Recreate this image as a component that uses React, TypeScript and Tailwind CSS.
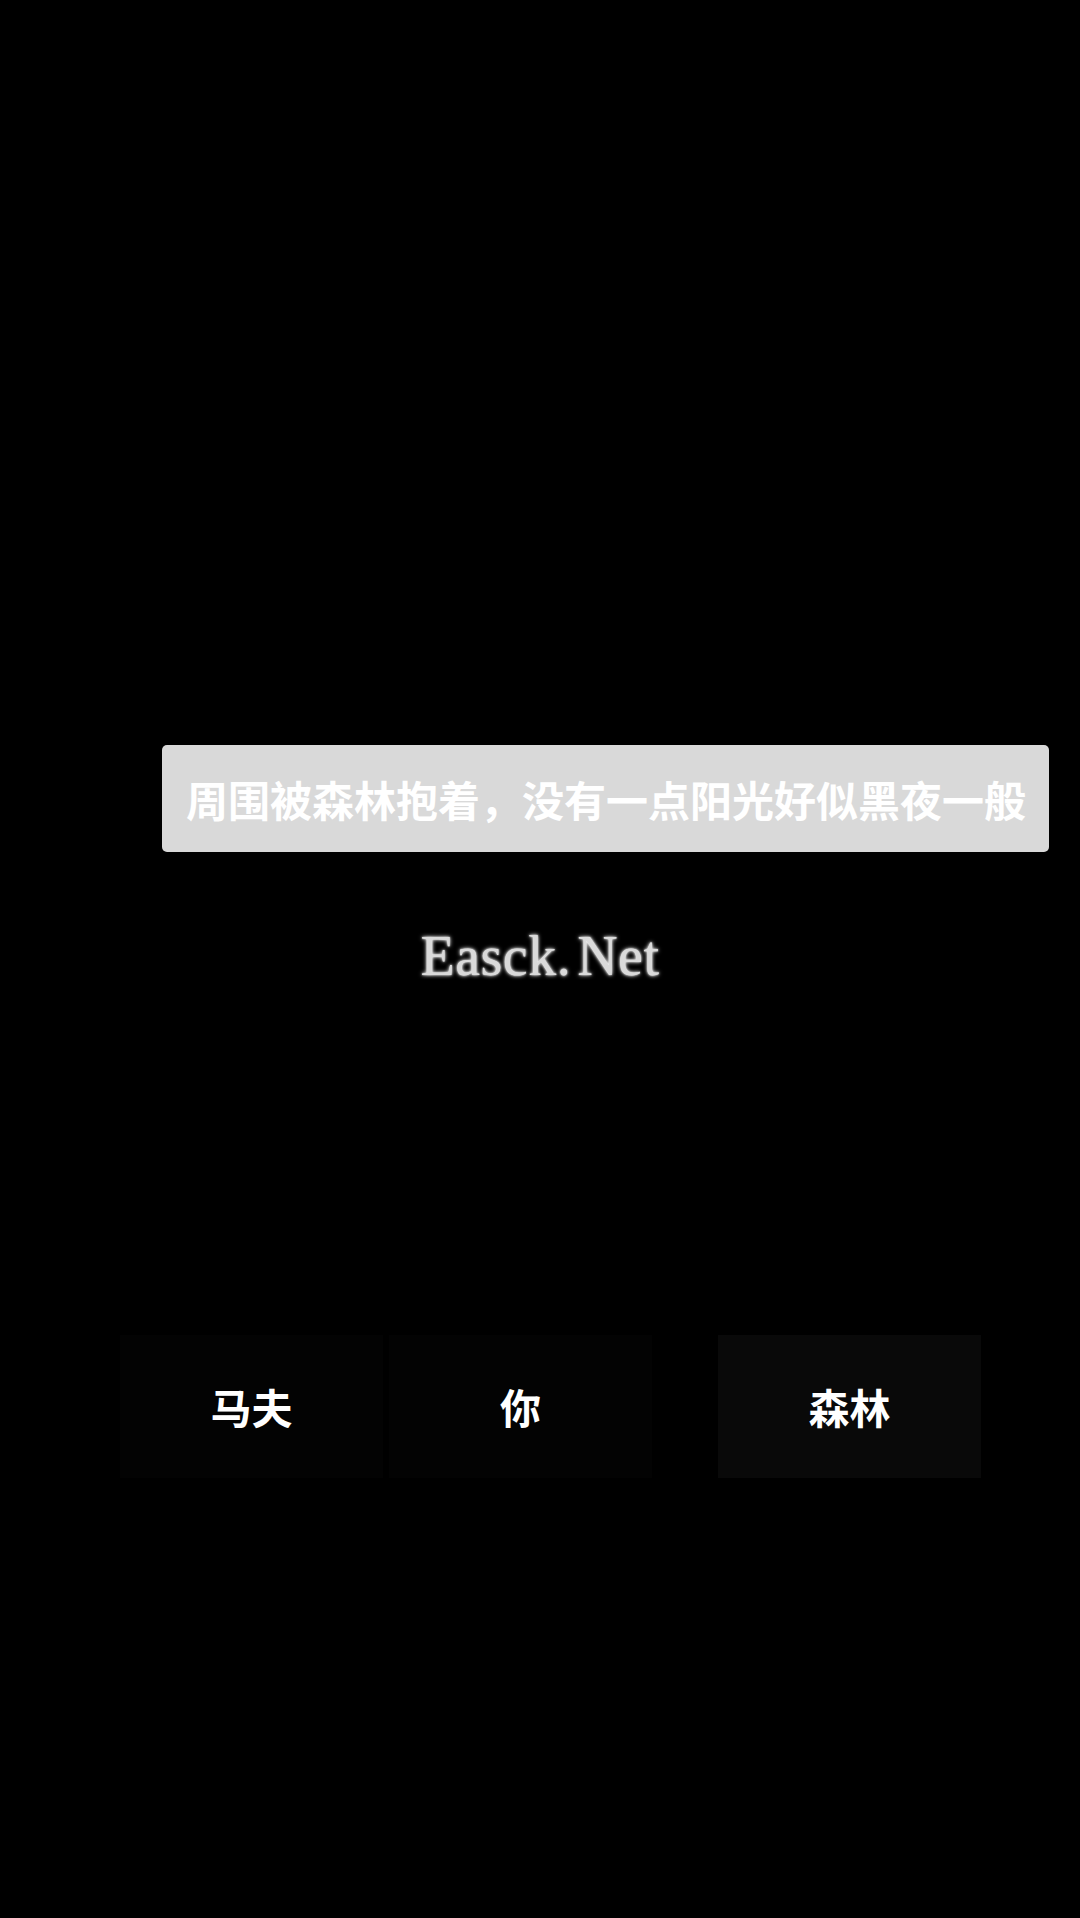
import React from 'react';

const cjk = { fontFamily: '"Noto Sans CJK SC", "Noto Sans", sans-serif' };

interface TabProps {
  label: string;
  active?: boolean;
}

const Tab: React.FC<TabProps> = ({ label, active }) => (
  <button
    className={`flex h-[143px] w-[263px] items-center justify-center text-[41px] font-bold text-white ${
      active ? 'bg-[#090909]' : 'bg-[#030303]'
    }`}
    style={cjk}
  >
    {label}
  </button>
);

export default function App() {
  return (
    <div className="flex h-[1918px] w-[1080px] flex-col bg-black">
      <div className="mt-[745px] ml-[162px] flex h-[107px] w-[887px] items-center rounded-[5px] bg-[#d9d9d9] pl-[24px]">
        <span className="text-[42px] font-bold leading-none text-white" style={cjk}>
          周围被森林抱着，没有一点阳光好似黑夜一般
        </span>
      </div>

      <div className="mt-[72px] flex justify-center">
        <span
          className="text-[56px] leading-[64px] tracking-[0.5px] text-[#dadada] [text-shadow:0_0_2px_#ffffff,0_0_4px_#ffffff]"
          style={{ fontFamily: '"Liberation Serif", serif' }}
        >
          Easck.<span className="ml-[6px]">Net</span>
        </span>
      </div>

      <div className="mt-[347px] ml-[120px] flex">
        <Tab label="马夫" />
        <div className="ml-[6px]">
          <Tab label="你" />
        </div>
        <div className="ml-[66px]">
          <Tab label="森林" active />
        </div>
      </div>
    </div>
  );
}
